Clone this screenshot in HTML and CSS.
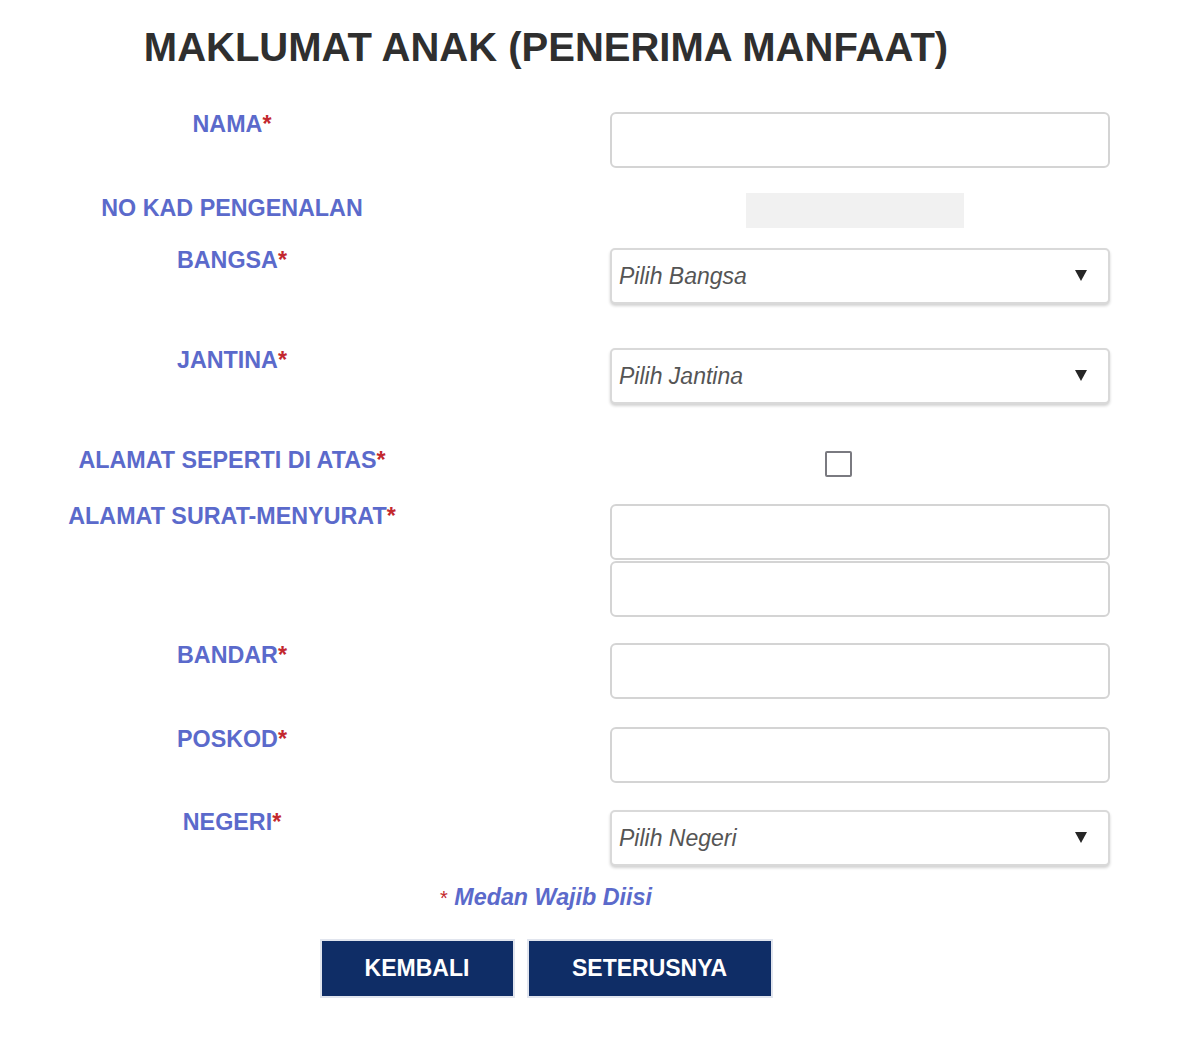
FILE: index.html
```html
<!DOCTYPE html>
<html lang="ms">
<head>
<meta charset="utf-8">
<title>Maklumat Anak</title>
<link rel="stylesheet" href="styles.css">
</head>
<body>
<div class="page">
  <h1 class="title">MAKLUMAT ANAK (PENERIMA MANFAAT)</h1>
  <div class="form">
    <div class="row row-nama">
      <div class="label">NAMA<span class="req">*</span></div>
      <div class="field"><div class="input"></div></div>
    </div>
    <div class="row row-nokad">
      <div class="label label-nokad">NO KAD PENGENALAN</div>
      <div class="field"><div class="readonly"></div></div>
    </div>
    <div class="row row-bangsa">
      <div class="label">BANGSA<span class="req">*</span></div>
      <div class="field"><div class="select"><span class="ph">Pilih Bangsa</span><span class="arrow"></span></div></div>
    </div>
    <div class="row row-jantina">
      <div class="label">JANTINA<span class="req">*</span></div>
      <div class="field"><div class="select"><span class="ph">Pilih Jantina</span><span class="arrow"></span></div></div>
    </div>
    <div class="row row-check">
      <div class="label">ALAMAT SEPERTI DI ATAS<span class="req">*</span></div>
      <div class="field"><div class="checkbox"></div></div>
    </div>
    <div class="row row-alamat">
      <div class="label">ALAMAT SURAT-MENYURAT<span class="req">*</span></div>
      <div class="field field-stack"><div class="input"></div><div class="input"></div></div>
    </div>
    <div class="row row-bandar">
      <div class="label">BANDAR<span class="req">*</span></div>
      <div class="field"><div class="input"></div></div>
    </div>
    <div class="row row-poskod">
      <div class="label">POSKOD<span class="req">*</span></div>
      <div class="field"><div class="input"></div></div>
    </div>
    <div class="row row-negeri">
      <div class="label">NEGERI<span class="req">*</span></div>
      <div class="field"><div class="select"><span class="ph">Pilih Negeri</span><span class="arrow"></span></div></div>
    </div>
  </div>
  <p class="note"><span class="note-req">*</span> Medan Wajib Diisi</p>
  <div class="actions">
    <button class="btn btn-back" type="button">KEMBALI</button>
    <button class="btn btn-next" type="button">SETERUSNYA</button>
  </div>
</div>
</body>
</html>
```

FILE: styles.css
```css
html, body {
  margin: 0;
  padding: 0;
  background: #ffffff;
}

body {
  font-family: "Liberation Sans", Arial, Helvetica, sans-serif;
}

.page {
  width: 1092px;
}

.title {
  margin: 23px 0 0;
  text-align: center;
  font-size: 40px;
  line-height: 48px;
  font-weight: bold;
  color: #2f2f2f;
}

.form {
  margin-top: 41px;
  width: 1110px;
}

.row {
  display: flex;
  align-items: flex-start;
}

.label {
  width: 464px;
  margin-top: -1px;
  text-align: center;
  font-size: 23.3px;
  line-height: 26px;
  font-weight: bold;
  color: #5b6acb;
}

.label-nokad {
  padding-top: 3px;
}

.req {
  color: #c3282e;
}

.field {
  margin-left: 146px;
  width: 500px;
  display: flex;
  flex-direction: column;
}

.field-stack {
  gap: 1px;
}

.input {
  box-sizing: border-box;
  height: 56px;
  border: 2px solid #d4d4d4;
  border-radius: 6px;
  background: #fff;
}

.readonly {
  margin-left: 136px;
  width: 218px;
  height: 35px;
  background: #f1f1f1;
}

.select {
  box-sizing: border-box;
  height: 56px;
  border: 2px solid #d9d9d9;
  border-radius: 5px;
  background: #fff;
  box-shadow: 0 2px 3px rgba(0, 0, 0, 0.18);
  display: flex;
  align-items: center;
  justify-content: space-between;
  padding: 0 21px 0 7px;
}

.ph {
  font-size: 23px;
  font-style: italic;
  color: #555555;
}

.arrow {
  width: 0;
  height: 0;
  border-left: 6px solid transparent;
  border-right: 6px solid transparent;
  border-top: 11px solid #262626;
  margin-top: -1px;
}

.checkbox {
  box-sizing: border-box;
  margin: 3px 0 0 215px;
  width: 27px;
  height: 26px;
  border: 2px solid #7a7a80;
  border-radius: 2px;
  background: #fff;
}

.row-nama { margin-bottom: 25px; }
.row-nokad { margin-bottom: 20px; }
.row-bangsa { margin-bottom: 44px; }
.row-jantina { margin-bottom: 44px; }
.row-check { margin-bottom: 27px; }
.row-alamat { margin-bottom: 26px; }
.row-bandar { margin-bottom: 28px; }
.row-poskod { margin-bottom: 27px; }

.note {
  margin: 18px 0 0;
  text-align: center;
  font-size: 23.3px;
  line-height: 26px;
  font-weight: bold;
  font-style: italic;
  color: #5b6acb;
}

.note-req {
  color: #c3282e;
  font-style: normal;
  font-weight: normal;
  font-size: 20px;
}

.actions {
  margin-top: 28px;
  display: flex;
  justify-content: center;
  gap: 12px;
}

.btn {
  box-sizing: border-box;
  height: 59px;
  border: 2px solid #e1e5ee;
  background: #0f2d66;
  color: #ffffff;
  font-family: "Liberation Sans", Arial, Helvetica, sans-serif;
  font-size: 23px;
  font-weight: bold;
  padding: 0;
  cursor: pointer;
}

.btn-back { width: 195px; }
.btn-next { width: 246px; }
```
